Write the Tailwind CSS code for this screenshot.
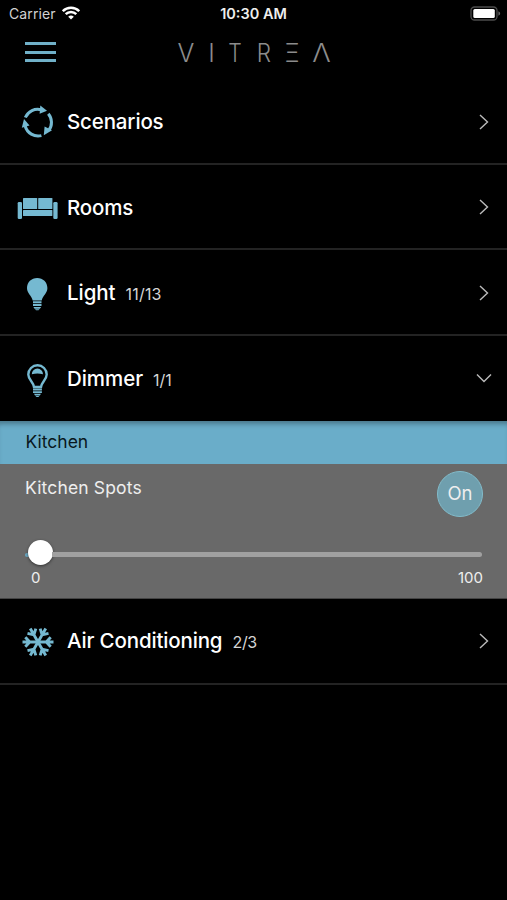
<!DOCTYPE html>
<html lang="en">
<head>
    <meta charset="UTF-8">
    <meta name="viewport" content="width=device-width, initial-scale=1.0">
    <title>Vitrea</title>
    <script src="https://cdn.jsdelivr.net/npm/@tailwindcss/browser@4"></script>
</head>
<body class="bg-black text-white font-['Inter',sans-serif] h-[900px] overflow-hidden">
    <!-- Status bar -->
    <div class="grid grid-cols-3 items-center h-7 pl-[9px] pr-[6px] text-[13.5px] leading-none">
        <div class="flex items-center gap-[6px] text-[#d2d2d2]">
            <span class="text-[14px] tracking-[0.1px]">Carrier</span>
            <svg class="w-[18px] h-[14px] mb-[2px]" viewBox="0 0 18 14" fill="none" stroke="#fff" stroke-width="2.5">
                <path d="M.8 5.2a11.6 11.6 0 0 1 16.4 0M3.7 8.2a7.5 7.5 0 0 1 10.6 0"/>
                <path d="M9 13.6l-2.8-2.8a4 4 0 0 1 5.6 0z" fill="#fff" stroke="none"/>
            </svg>
        </div>
        <span class="text-center text-[14.5px] font-semibold text-[#eee] whitespace-nowrap -ml-[3px]">10:30 AM</span>
        <svg class="justify-self-end w-[31px] h-[15px] mb-[2px]" viewBox="0 0 31 15">
            <rect x="1" y="1" width="26" height="13" rx="3.5" fill="none" stroke="#4c4c4c" stroke-width="1.3"/>
            <rect x="3.3" y="3" width="21.5" height="9" rx="1.5" fill="#fff"/>
            <path d="M28.4 5.3v4.4q1.8-.7 1.8-2.2t-1.8-2.2z" fill="#666"/>
        </svg>
    </div>

    <!-- Header -->
    <header class="flex items-center h-[51px] pl-[25px] pb-[3px]">
        <button class="flex flex-col gap-[5.5px] w-[31px]">
            <span class="h-[3px] bg-[#70b0c8]"></span>
            <span class="h-[3px] bg-[#70b0c8]"></span>
            <span class="h-[3px] bg-[#70b0c8]"></span>
        </button>
        <div class="ml-[121px] mt-[2px] grid grid-cols-[18px_33px_13px_45px_12px_47px] justify-items-center text-[25px] leading-none font-light text-[#8c8c8c]">
            <span>V</span>
            <span>I</span>
            <span class="-mx-2 scale-x-85">T</span>
            <span class="scale-x-90">R</span>
            <span class="-mx-2 scale-x-90">Ξ</span>
            <span class="scale-x-110">Λ</span>
        </div>
    </header>

    <main>
        <section class="flex items-center h-[85.5px] border-b-2 border-[#232323] pl-[17px] pr-[17px] pt-[2px]">
            <svg class="w-[42px] h-[36px] mt-[3px]" viewBox="0 0 42 36" fill="none" stroke="#75b9d1" stroke-width="3">
                <path d="M8.3 12.5A13.4 13.4 0 0 1 24.5 4.9M31.3 8.8A13.4 13.4 0 0 1 31.8 25.5M24.4 30.6A13.4 13.4 0 0 1 8.2 21"/>
                <g fill="#75b9d1" stroke="none">
                    <path d="M23.3 .6l6.7 5.2-7.4 3z"/>
                    <path d="M35 25.2l-8.2 5 .8-8.7z"/>
                    <path d="M7 14l5.5 6.5-7.7 2.3z"/>
                </g>
            </svg>
            <span class="ml-[8px] mt-[2px] text-[20.5px] font-medium tracking-[-0.15px]">Scenarios</span>
            <svg class="ml-auto w-3 h-4" viewBox="0 0 12 16" fill="none" stroke="#bbb" stroke-width="1.4"><path d="M2 1l7.5 7L2 15"/></svg>
        </section>

        <section class="flex items-center h-[85.5px] border-b-2 border-[#232323] pl-[17px] pr-[17px] pt-[2px]">
            <svg class="w-[42px] h-[36px] mt-[2px]" viewBox="0 0 42 36" fill="#75b9d1">
                <rect x=".7" y="12" width="4.3" height="17" rx="1.3"/>
                <rect x="36.3" y="12" width="4.3" height="17" rx="1.3"/>
                <rect x="6" y="8" width="14.2" height="11" rx=".6"/>
                <rect x="21.2" y="8" width="14.2" height="11" rx=".6"/>
                <rect x="6" y="20" width="29.4" height="6" rx=".5"/>
            </svg>
            <span class="ml-[8px] mt-[2px] text-[20.5px] font-medium tracking-[-0.15px]">Rooms</span>
            <svg class="ml-auto w-3 h-4" viewBox="0 0 12 16" fill="none" stroke="#bbb" stroke-width="1.4"><path d="M2 1l7.5 7L2 15"/></svg>
        </section>

        <section class="flex items-center h-[85.5px] border-b-2 border-[#232323] pl-[17px] pr-[17px] pt-[2px]">
            <svg class="w-[42px] h-[36px] mt-[3px]" viewBox="0 0 42 36" fill="#75b9d1">
                <path d="M20.2 2C14.4 2 10 6.3 10 12c0 5.5 4.7 7.5 5.7 12.6h9C25.7 19.5 30.4 17.5 30.4 12 30.4 6.3 26 2 20.2 2z"/>
                <path d="M16 25.3h8.5v2H16zM16 28.1h8.5v2H16zM16.4 30.9h7.7l-1.2 1.8h-5.3zM18 33.2h4.5l-1 1h-2.5z"/>
            </svg>
            <span class="ml-[8px] mt-[2px] text-[20.5px] font-medium tracking-[-0.05px]">Light</span>
            <span class="ml-[10px] mt-[3px] text-[16px] tracking-[0.2px] text-[#d5d5d5]">11/13</span>
            <svg class="ml-auto w-3 h-4" viewBox="0 0 12 16" fill="none" stroke="#bbb" stroke-width="1.4"><path d="M2 1l7.5 7L2 15"/></svg>
        </section>

        <section class="flex items-center h-[85.5px] pl-[17px] pr-[15px]">
            <svg class="w-[42px] h-[36px] mt-[3px]" viewBox="0 0 42 36" fill="#75b9d1">
                <path d="M17 25c-.7-5-5.7-7.5-5.7-12.5a9.2 9.2 0 0 1 18.4 0c0 5-5 7.5-5.7 12.5z" fill="none" stroke="#75b9d1" stroke-width="2.4"/>
                <path d="M14.8 12.2a5.6 5.6 0 0 1 11.2 0q-5.6-1.5-11.2 0z"/>
                <path d="M16 26.6h8.9v1.9H16zM16 29.2h8.9v1.9H16zM17 31.8h6.9l-1 1.6h-4.9zM18.5 34h3.9l-1 .9h-1.9z"/>
            </svg>
            <span class="ml-[8px] mt-[2px] text-[20.5px] font-medium tracking-[-0.05px]">Dimmer</span>
            <span class="ml-[10px] mt-[3px] text-[16px] text-[#d5d5d5]">1/1</span>
            <svg class="ml-auto w-4 h-3" viewBox="0 0 16 12" fill="none" stroke="#bbb" stroke-width="1.4"><path d="M1 2.5l7 7 7-7"/></svg>
        </section>

        <!-- Expanded dimmer panel -->
        <div class="flex items-center h-[43px] pl-[25.5px] bg-[#6aadc9] text-[#081820] text-[17.5px] shadow-[inset_0_6px_5px_-3px_#4a788b]">Kitchen</div>
        <div class="h-[135px] pl-[25px] pr-[24px] bg-[#696969] text-[#eee] border-b border-[#444]">
            <div class="flex justify-between pt-[7px]">
                <span class="mt-1 text-[17.5px] tracking-[0.15px]">Kitchen Spots</span>
                <button class="size-[46px] rounded-full border-[1.5px] border-[#82bccb] bg-[#6f9fae] text-[18.5px]">On</button>
            </div>
            <div class="flex items-center h-[26px] mt-[22px] pr-px">
                <span class="w-[4px] h-1 mt-[5px] rounded-l-full bg-[#6aadc9]"></span>
                <span class="size-[25px] -mx-px rounded-full bg-white shadow-[0_1px_3px_#333]"></span>
                <span class="grow h-[5px] mt-[5px] rounded-r-full bg-[#a0a0a0]"></span>
            </div>
            <div class="flex justify-between mt-[2px] pl-[6px] text-[15px]">
                <span>0</span>
                <span>100</span>
            </div>
        </div>

        <section class="flex items-center h-[85.5px] border-b-2 border-[#232323] pl-[17px] pr-[17px]">
            <svg class="w-[42px] h-[36px] mt-[2px]" viewBox="-21 -18 42 36" fill="none" stroke="#75b9d1" stroke-width="2.9">
                <path id="arm" d="M0 0h15.5M12.7 -4.8L8.2 0l4.5 4.8"/>
                <use href="#arm" transform="rotate(60)"/>
                <use href="#arm" transform="rotate(120)"/>
                <use href="#arm" transform="rotate(180)"/>
                <use href="#arm" transform="rotate(240)"/>
                <use href="#arm" transform="rotate(300)"/>
            </svg>
            <span class="ml-[8px] mt-[2px] text-[20.5px] font-medium tracking-[-0.15px]">Air Conditioning</span>
            <span class="ml-[10px] mt-[3px] text-[16px] tracking-[-0.3px] text-[#d5d5d5]">2/3</span>
            <svg class="ml-auto w-3 h-4" viewBox="0 0 12 16" fill="none" stroke="#bbb" stroke-width="1.4"><path d="M2 1l7.5 7L2 15"/></svg>
        </section>
    </main>
</body>
</html>
